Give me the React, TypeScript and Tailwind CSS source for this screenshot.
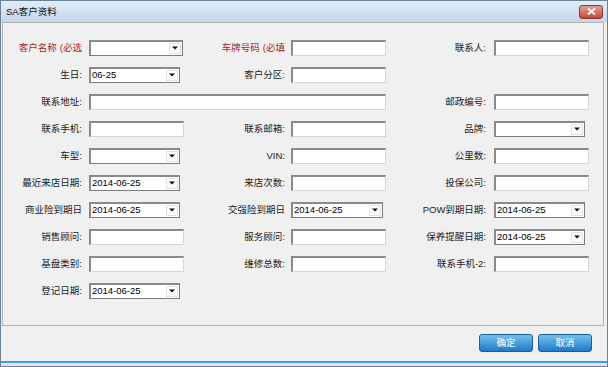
import React from "react";

const FONT = { fontFamily: '"Liberation Sans","Noto Sans CJK SC",sans-serif' };

function Label({ children, red, pr = "pr-[7px]" }: { children: React.ReactNode; red?: boolean; pr?: string }) {
  return (
    <div
      className={`flex items-center justify-end whitespace-nowrap text-[9.5px] leading-none ${pr} ${
        red ? "text-[#a82424]" : "text-[#1c1c1c]"
      }`}
    >
      {children}
    </div>
  );
}

function Input({ w = "w-[95px]" }: { w?: string }) {
  return (
    <div className="flex items-center">
      <div
        className={`h-[16px] ${w} bg-white border-t-2 border-l-2 border-r border-b border-t-[#8a8a8a] border-l-[#8a8a8a] border-r-[#d6d6d6] border-b-[#d6d6d6]`}
      />
    </div>
  );
}

function Select({ w = "w-[91px]", value = "" }: { w?: string; value?: string }) {
  return (
    <div className="flex items-center">
      <div
        className={`h-[16px] ${w} bg-white flex items-center border-t-2 border-l-2 border-r border-b border-t-[#8a8a8a] border-l-[#8a8a8a] border-r-[#7c7c7c] border-b-[#7c7c7c]`}
      >
        <span className="flex-1 pl-[1px] text-[9.5px] leading-none text-black whitespace-nowrap">{value}</span>
        <span className="w-[12px] h-[11px] mr-[1px] flex items-center justify-center bg-[#fafafa] border border-[#e2e2e2]">
          <svg width="6" height="4" viewBox="0 0 6 4">
            <path d="M0 0.5 L6 0.5 L3 3.5 Z" fill="#111" />
          </svg>
        </span>
      </div>
    </div>
  );
}

const D = "2014-06-25";
const P2 = "pr-[6px]";
const P3 = "pr-[8px]";

export default function App() {
  return (
    <div
      style={FONT}
      className="w-[608px] h-[367px] flex flex-col bg-[#f0f0f0] border border-[#6f8196] overflow-hidden"
    >
      {/* title bar */}
      <div className="h-[21px] shrink-0 flex items-center justify-between pl-[5px] pr-[4px] bg-gradient-to-b from-[#e2ecf7] to-[#c4d7ed]">
        <span className="text-[9.5px] leading-none text-[#111]">SA客户资料</span>
        <div className="w-[24px] h-[14px] rounded-[3px] border border-[#8c3a30] bg-gradient-to-b from-[#e7a093] to-[#c2463a] flex items-center justify-center">
          <svg width="9" height="7" viewBox="0 0 9 7">
            <path d="M1 0.5 L8 6.5 M8 0.5 L1 6.5" stroke="#fff" strokeWidth="1.8" />
          </svg>
        </div>
      </div>

      {/* panel */}
      <div className="h-[304px] shrink-0 ml-[1px] mr-[3px] border border-[#b4b4b4] bg-[#f0f0f0] pt-[11px]">
        <div className="grid grid-cols-[86px_96px_106px_96px_107px_96px] auto-rows-[27px]">
          {/* row 1 */}
          <Label red>
            客户名称<span className="ml-[3px]">(</span>必选
          </Label>
          <Select w="w-[94px]" />
          <Label red pr={P2}>
            车牌号码<span className="ml-[3px]">(</span>必填
          </Label>
          <Input />
          <Label pr={P3}>联系人:</Label>
          <Input />

          {/* row 2 */}
          <Label>生日:</Label>
          <Select value="06-25" />
          <Label pr={P2}>客户分区:</Label>
          <Input />
          <div />
          <div />

          {/* row 3 */}
          <Label>联系地址:</Label>
          <div className="col-span-3 flex items-center">
            <div className="h-[16px] w-[297px] bg-white border-t-2 border-l-2 border-r border-b border-t-[#8a8a8a] border-l-[#8a8a8a] border-r-[#d6d6d6] border-b-[#d6d6d6]" />
          </div>
          <Label pr={P3}>邮政编号:</Label>
          <Input />

          {/* row 4 */}
          <Label>联系手机:</Label>
          <Input />
          <Label pr={P2}>联系邮箱:</Label>
          <Input />
          <Label pr={P3}>品牌:</Label>
          <Select />

          {/* row 5 */}
          <Label>车型:</Label>
          <Select />
          <Label pr={P2}>VIN:</Label>
          <Input />
          <Label pr={P3}>公里数:</Label>
          <Input />

          {/* row 6 */}
          <Label>最近来店日期:</Label>
          <Select value={D} />
          <Label pr={P2}>来店次数:</Label>
          <Input />
          <Label pr={P3}>投保公司:</Label>
          <Input />

          {/* row 7 */}
          <Label>商业险到期日</Label>
          <Select value={D} />
          <Label pr={P2}>交强险到期日</Label>
          <Select w="w-[92px]" value={D} />
          <Label pr={P3}>POW到期日期:</Label>
          <Select value={D} />

          {/* row 8 */}
          <Label>销售顾问:</Label>
          <Input />
          <Label pr={P2}>服务顾问:</Label>
          <Input />
          <Label pr={P3}>保养提醒日期:</Label>
          <Select value={D} />

          {/* row 9 */}
          <Label>基盘类别:</Label>
          <Input />
          <Label pr={P2}>维修总数:</Label>
          <Input />
          <Label pr={P3}>联系手机-2:</Label>
          <Input />

          {/* row 10 */}
          <Label>登记日期:</Label>
          <Select value={D} />
        </div>
      </div>

      {/* footer */}
      <div className="h-[35px] shrink-0 flex justify-end items-start gap-[5px] pr-[15px] pt-[8px]">
        <button className="w-[54px] h-[18px] rounded-[3px] border border-[#1d5f95] bg-gradient-to-b from-[#74c0f0] to-[#1d7ac4] text-white text-[9.5px] leading-none flex items-center justify-center">
          确定
        </button>
        <button className="w-[54px] h-[18px] rounded-[3px] border border-[#1d5f95] bg-gradient-to-b from-[#74c0f0] to-[#1d7ac4] text-white text-[9.5px] leading-none flex items-center justify-center">
          取消
        </button>
      </div>
      <div className="h-[2px] shrink-0 bg-[#3aa3dc]" />
      <div className="flex-1 bg-[#dfe6ee]" />
    </div>
  );
}
